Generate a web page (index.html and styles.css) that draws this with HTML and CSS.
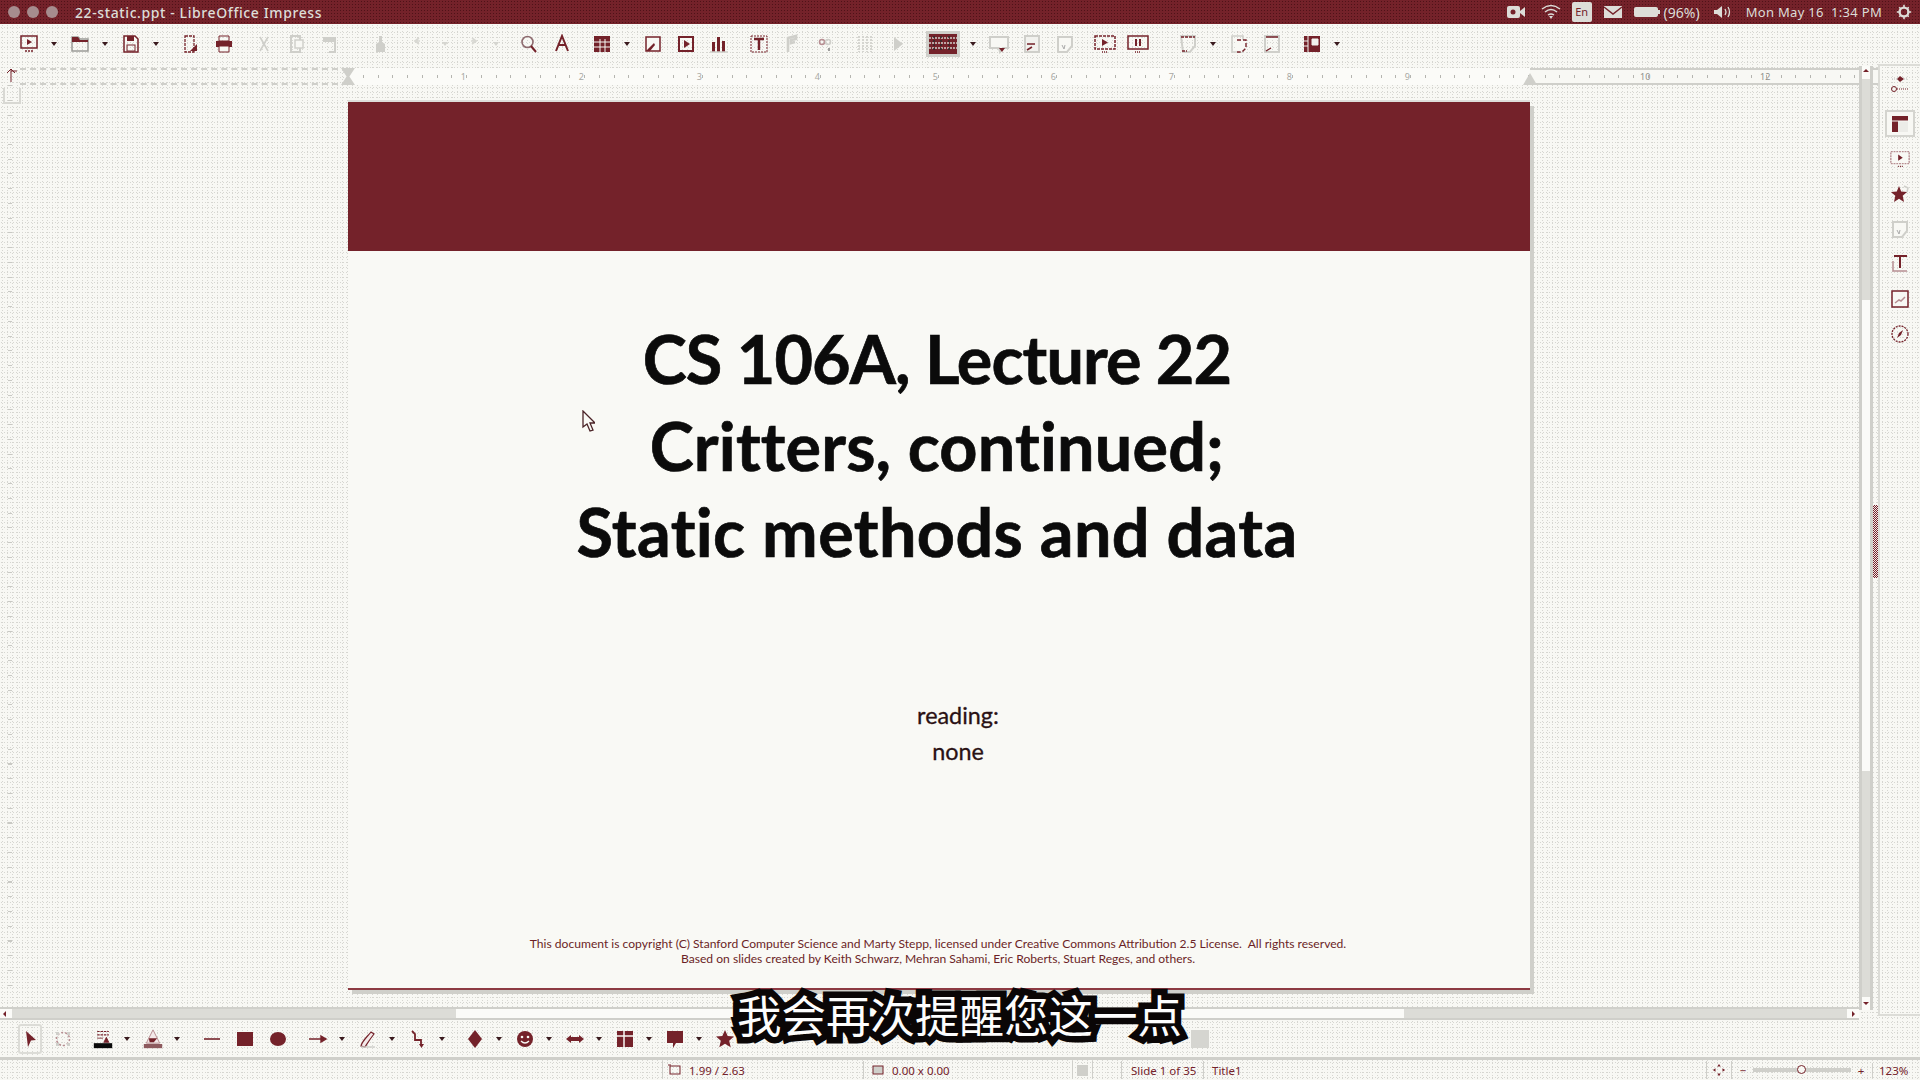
FILE: index.html
```html
<!DOCTYPE html>
<html lang="en">
<head>
    <meta charset="UTF-8">
    <meta name="viewport" content="width=device-width, initial-scale=1.0">
    <title>22-static.ppt - LibreOffice Impress</title>
    <link rel="stylesheet" href="styles.css">
</head>
<body>
    <!-- Icon set -->
    <svg class="icon-defs" xmlns="http://www.w3.org/2000/svg">
        <symbol id="i-present" viewBox="0 0 20 20"><rect x="2" y="2" width="16" height="12" fill="none" stroke="#74222a" stroke-width="1.5"/><path d="M8 5l5 3-5 3z" fill="#74222a"/><path d="M6 17h8" stroke="#74222a" stroke-width="1.5" stroke-dasharray="2 1"/></symbol>
        <symbol id="i-open" viewBox="0 0 20 20"><path d="M2 3h6l2 2h8v12H2z" fill="none" stroke="#9a9a96" stroke-width="1.5"/><path d="M2 3h6l2 3h8v2H2z" fill="#74222a"/></symbol>
        <symbol id="i-save" viewBox="0 0 20 20"><path d="M3 2h11l3 3v13H3z" fill="none" stroke="#74222a" stroke-width="1.5"/><rect x="6" y="2" width="7" height="5" fill="#74222a"/><rect x="6" y="11" width="8" height="6" fill="none" stroke="#74222a"/></symbol>
        <symbol id="i-export" viewBox="0 0 20 20"><path d="M4 2h9v16H4z" fill="none" stroke="#74222a" stroke-width="1.3" stroke-dasharray="3 1"/><path d="M9 17l7-7v7z" fill="#74222a"/></symbol>
        <symbol id="i-print" viewBox="0 0 20 20"><path d="M5 2h10v5H5z" fill="none" stroke="#74222a"/><rect x="2" y="7" width="16" height="6" fill="#74222a"/><path d="M5 12h10v6H5z" fill="#f8f8f4" stroke="#74222a"/></symbol>
        <symbol id="i-cut" viewBox="0 0 20 20"><path d="M6 3l8 14M14 3L6 17" stroke="#cfcfca" stroke-width="1.6"/></symbol>
        <symbol id="i-copy" viewBox="0 0 20 20"><path d="M4 2h9v16H4z" fill="none" stroke="#cfcfca" stroke-width="2"/><path d="M8 6h8v8H8z" fill="#f8f8f4" stroke="#cfcfca" stroke-width="1.5"/></symbol>
        <symbol id="i-paste" viewBox="0 0 20 20"><path d="M3 3h13v5H3z" fill="#cfcfca"/><path d="M15 8v10H9" fill="none" stroke="#cfcfca" stroke-width="2"/></symbol>
        <symbol id="i-brush" viewBox="0 0 20 20"><path d="M9 2h3v6l3 2v8H6v-8l3-2z" fill="#cfcfca"/></symbol>
        <symbol id="i-undo" viewBox="0 0 20 20"><path d="M4 7h6M9 4l-4 3 4 3" fill="none" stroke="#d8d8d3" stroke-width="1.6"/></symbol>
        <symbol id="i-redo" viewBox="0 0 20 20"><path d="M16 7h-6M11 4l4 3-4 3" fill="none" stroke="#d8d8d3" stroke-width="1.6"/></symbol>
        <symbol id="i-find" viewBox="0 0 20 20"><circle cx="8.5" cy="8" r="5.5" fill="none" stroke="#8d6a6e" stroke-width="1.6"/><path d="M12 12l5 6" stroke="#74222a" stroke-width="2"/></symbol>
        <symbol id="i-font" viewBox="0 0 20 20"><path d="M4 17L10 2l6 15M7 11h6" fill="none" stroke="#74222a" stroke-width="2"/></symbol>
        <symbol id="i-table" viewBox="0 0 20 20"><rect x="2" y="2" width="16" height="16" fill="#74222a"/><path d="M8 5v13M13 5v13M2 8h16M2 13h16" stroke="#f8f8f4"/></symbol>
        <symbol id="i-image" viewBox="0 0 20 20"><rect x="3" y="3" width="14" height="14" fill="#f8f8f4" stroke="#74222a" stroke-width="1.5"/><path d="M3 17l8-8 1 2-5 6z" fill="#74222a"/></symbol>
        <symbol id="i-media" viewBox="0 0 20 20"><rect x="3" y="3" width="14" height="14" fill="none" stroke="#74222a" stroke-width="2"/><path d="M8 6l6 4-6 4z" fill="#74222a"/></symbol>
        <symbol id="i-chart" viewBox="0 0 20 20"><path d="M3 18V8h3v10zM8 18V3h3v15zM13 18V7h3v11z" fill="#74222a"/><path d="M1 18h18" stroke="#cfcfca" stroke-width="1.5"/></symbol>
        <symbol id="i-text" viewBox="0 0 20 20"><rect x="2" y="2" width="16" height="16" fill="none" stroke="#74222a" stroke-dasharray="2 1"/><path d="M5 5h10M10 5v11" stroke="#74222a" stroke-width="2.4"/></symbol>
        <symbol id="i-fontwork" viewBox="0 0 20 20"><path d="M6 18V4l8-2v3l-5 1v3l4-1" fill="none" stroke="#cfcfca" stroke-width="2.6"/></symbol>
        <symbol id="i-link" viewBox="0 0 20 20"><circle cx="7" cy="8" r="2.5" fill="none" stroke="#b78e92" stroke-width="1.5"/><circle cx="13" cy="8" r="2.5" fill="none" stroke="#cfcfca" stroke-width="1.5"/><path d="M14 14v3" stroke="#888" stroke-width="1.6"/></symbol>
        <symbol id="i-grid" viewBox="0 0 20 20"><path d="M4 2v16M8 2v16M12 2v16M16 2v16" stroke="#d5d5d0" stroke-width="2" stroke-dasharray="2 1"/></symbol>
        <symbol id="i-play-g" viewBox="0 0 20 20"><path d="M6 3l9 7-9 7z" fill="#cfcfca"/></symbol>
        <symbol id="i-master" viewBox="0 0 28 20"><rect x="0" y="0" width="28" height="20" fill="#74222a"/><path d="M0 4h28M0 9h28M0 14h28" stroke="#cfcfca" stroke-width="1.4" stroke-dasharray="2 1"/><path d="M5 2v16M12 2v16M20 2v16" stroke="#2a2a2a" stroke-width="1.4" stroke-dasharray="2 2"/></symbol>
        <symbol id="i-comment" viewBox="0 0 24 20"><path d="M3 3h18v11h-5l-3 4-1-4H3z" fill="#f8f8f4" stroke="#cfcfca" stroke-width="2"/><path d="M12 14h6l-3 4z" fill="#74222a"/></symbol>
        <symbol id="i-slidesort" viewBox="0 0 20 20"><rect x="3" y="2" width="14" height="16" fill="#f2f2ee" stroke="#cfcfca" stroke-width="2"/><path d="M5 10h8M5 16l5-3" stroke="#74222a" stroke-width="1.6"/></symbol>
        <symbol id="i-shield-g" viewBox="0 0 20 20"><path d="M3 3h14v9l-5 6H3z" fill="#f8f8f4" stroke="#cfcfca" stroke-width="2"/><path d="M7 11l2 4 1-4" stroke="#aaa" fill="none"/></symbol>
        <symbol id="i-show" viewBox="0 0 24 20"><rect x="2" y="2" width="20" height="13" fill="none" stroke="#74222a" stroke-dasharray="3 1" stroke-width="1.5"/><path d="M9 5l6 3.5-6 3.5z" fill="#74222a"/><path d="M9 18h6" stroke="#74222a" stroke-dasharray="1 1" stroke-width="1.5"/></symbol>
        <symbol id="i-pause" viewBox="0 0 24 20"><rect x="2" y="2" width="20" height="13" fill="none" stroke="#74222a" stroke-width="1.5"/><path d="M10 5v7M14 5v7" stroke="#74222a" stroke-width="2"/><path d="M9 18h6" stroke="#74222a" stroke-dasharray="1 1" stroke-width="1.5"/></symbol>
        <symbol id="i-page-a" viewBox="0 0 20 20"><path d="M3 2h14v10l-5 6H5z" fill="none" stroke="#cfcfca" stroke-width="2"/><path d="M3 3h14M4 17h5" stroke="#74222a" stroke-width="1.4" stroke-dasharray="3 1"/></symbol>
        <symbol id="i-page-b" viewBox="0 0 20 20"><path d="M3 2h11v16H3z" fill="none" stroke="#cfcfca" stroke-width="1.6"/><path d="M8 6h9v8l-4 4H8" fill="#f8f8f4" stroke="#74222a" stroke-width="1.4" stroke-dasharray="4 2"/></symbol>
        <symbol id="i-page-c" viewBox="0 0 20 20"><path d="M3 2h14v16H3z" fill="none" stroke="#cfcfca" stroke-width="2"/><path d="M4 3h12M4 17l5-3" stroke="#74222a" stroke-width="1.4"/></symbol>
        <symbol id="i-page-d" viewBox="0 0 20 20"><rect x="2" y="2" width="16" height="16" fill="#74222a"/><path d="M10 5h6v6h-6zM6 2v16M2 7h4M2 12h4" fill="#f2f2ee" stroke="#f2f2ee"/></symbol>
        <!-- drawing toolbar -->
        <symbol id="i-arrow" viewBox="0 0 20 20"><path d="M6 2l10 9-5 .5L8 18z" fill="#74222a"/></symbol>
        <symbol id="i-points" viewBox="0 0 20 20"><circle cx="10" cy="10" r="6.5" fill="none" stroke="#b78e92" stroke-width="1.6" stroke-dasharray="2 2"/><path d="M3 3h3v3H3zM14 3h3v3h-3zM3 14h3v3H3zM14 14h3v3h-3z" fill="#cfcfca"/></symbol>
        <symbol id="i-linecolor" viewBox="0 0 24 24"><path d="M5 3h14M5 7h14" stroke="#74222a" stroke-width="1.4" stroke-dasharray="3 1"/><path d="M5 11h7M16 10l3 6h-6z" stroke="#74222a" fill="#74222a"/><rect x="1" y="17" width="22" height="6" fill="#0b0b0b"/></symbol>
        <symbol id="i-fillcolor" viewBox="0 0 24 24"><path d="M12 1l8 16H4z" fill="#f4e9e9" stroke="#b98f93" stroke-width="1.2"/><path d="M7 11h10l-4 5H8z" fill="#74222a"/><rect x="1" y="18" width="22" height="5" fill="#8d5a5e"/></symbol>
        <symbol id="i-line" viewBox="0 0 20 20"><path d="M2 10h16" stroke="#74222a" stroke-width="1.6"/></symbol>
        <symbol id="i-rect" viewBox="0 0 20 20"><rect x="2" y="3" width="16" height="14" fill="#74222a"/></symbol>
        <symbol id="i-ellipse" viewBox="0 0 20 20"><ellipse cx="10" cy="10" rx="8" ry="7" fill="#74222a"/></symbol>
        <symbol id="i-lineend" viewBox="0 0 20 20"><path d="M1 10h15M13 7l5 3-5 3z" stroke="#74222a" stroke-width="1.4" fill="#74222a"/></symbol>
        <symbol id="i-curve" viewBox="0 0 20 20"><path d="M3 17c1-5 6-9 10-14l3 2c-4 5-7 10-9 13z" fill="#f4e9e9" stroke="#74222a" stroke-width="1.2"/><path d="M3 18h14" stroke="#cfcfca" stroke-width="1.4"/></symbol>
        <symbol id="i-connector" viewBox="0 0 20 20"><path d="M4 2l3 3v6h6v6" fill="none" stroke="#74222a" stroke-width="1.8"/><path d="M11 15h5l-2.5 4z" fill="#74222a"/></symbol>
        <symbol id="i-diamond" viewBox="0 0 20 20"><path d="M10 1l7 9-7 9-7-9z" fill="#74222a"/></symbol>
        <symbol id="i-smile" viewBox="0 0 20 20"><circle cx="10" cy="10" r="8" fill="#74222a"/><circle cx="7" cy="8" r="1.3" fill="#f8f8f4"/><circle cx="13" cy="8" r="1.3" fill="#f8f8f4"/><path d="M6 12q4 4 8 0" stroke="#f8f8f4" fill="none" stroke-width="1.3"/></symbol>
        <symbol id="i-dblarrow" viewBox="0 0 20 20"><path d="M1 10l5-4v2h8V6l5 4-5 4v-2H6v2z" fill="#74222a"/></symbol>
        <symbol id="i-flow" viewBox="0 0 20 20"><rect x="2" y="2" width="16" height="16" fill="#74222a"/><path d="M2 7h16M9 2v16" stroke="#f8f8f4" stroke-width="1.5"/></symbol>
        <symbol id="i-callout" viewBox="0 0 20 20"><path d="M2 2h16v12h-7l-3 5v-5H2z" fill="#74222a"/></symbol>
        <symbol id="i-star" viewBox="0 0 20 20"><path d="M10 1l2.7 6 6.3.6-4.8 4.2 1.5 6.4-5.7-3.4-5.7 3.4 1.5-6.4L1 7.600 7.300 7z" fill="#74222a"/></symbol>
        <!-- sidebar -->
        <symbol id="i-settings" viewBox="0 0 24 24"><path d="M4 7h16" stroke="#bbb" stroke-dasharray="1 1"/><path d="M12 4l4 3-4 3-3-3z" fill="#74222a"/><circle cx="6" cy="17" r="2.5" fill="none" stroke="#74222a"/><path d="M9 17h11" stroke="#74222a" stroke-dasharray="1 1"/></symbol>
        <symbol id="i-props" viewBox="0 0 20 20"><rect x="2" y="2" width="16" height="16" fill="#74222a"/><path d="M8 7h10v11H8z" fill="#ecece8"/><path d="M2 7h16" stroke="#f8f8f4"/></symbol>
        <symbol id="i-trans" viewBox="0 0 24 20"><rect x="2" y="2" width="20" height="13" fill="#f8f8f4" stroke="#b78e92" stroke-dasharray="2 1" stroke-width="1.5"/><path d="M10 5l5 3.5-5 3.5z" fill="#74222a"/><path d="M10 18h5" stroke="#74222a" stroke-dasharray="1 1" stroke-width="1.5"/></symbol>
        <symbol id="i-sidestar" viewBox="0 0 20 20"><path d="M9 2l2.2 5.4L17 8l-4.3 3.800L14 18l-5-3.300L4 18l1.300-6.200L1 8l5.800-.6z" fill="#74222a"/><path d="M14 2l4 2-1 4" stroke="#cfcfca" fill="none" stroke-width="1.5"/></symbol>
        <symbol id="i-sidetext" viewBox="0 0 20 20"><path d="M4 2h13M10 2v12" stroke="#74222a" stroke-width="2"/><path d="M3 7v10h14" fill="none" stroke="#b78e92" stroke-width="1.5"/></symbol>
        <symbol id="i-gallery" viewBox="0 0 20 20"><rect x="2" y="2" width="16" height="16" fill="#f8f8f4" stroke="#74222a" stroke-width="1.5"/><path d="M5 14l4-3 2 1 4-4" fill="none" stroke="#b78e92" stroke-width="1.5"/></symbol>
        <symbol id="i-compass" viewBox="0 0 20 20"><circle cx="10" cy="10" r="8" fill="none" stroke="#74222a" stroke-dasharray="2 1" stroke-width="1.3"/><path d="M13 6l-2 5-4 3 2-5z" fill="#74222a"/></symbol>
        <!-- indicators -->
        <symbol id="i-camera" viewBox="0 0 20 14"><rect x="1" y="1" width="13" height="12" rx="2" fill="#ddddd8"/><path d="M14 6l5-4v10l-5-4z" fill="#ddddd8"/><circle cx="7" cy="7" r="2.5" fill="#74222a"/></symbol>
        <symbol id="i-wifi" viewBox="0 0 20 16"><path d="M1 5q9-7 18 0M4 8q6-5 12 0M7 11q3-2 6 0" fill="none" stroke="#ddddd8" stroke-width="1.4"/><path d="M10 15l-2-3h4z" fill="#ddddd8"/></symbol>
        <symbol id="i-mail" viewBox="0 0 20 14"><rect x="1" y="1" width="18" height="12" fill="#ddddd8"/><path d="M1 2l9 7 9-7" fill="none" stroke="#74222a" stroke-width="1.4"/></symbol>
        <symbol id="i-battery" viewBox="0 0 26 12"><rect x="0" y="1" width="24" height="10" rx="2" fill="#ddddd8"/><rect x="24" y="4" width="2" height="4" fill="#ddddd8"/></symbol>
        <symbol id="i-volume" viewBox="0 0 20 14"><path d="M1 5h3l5-4v12L4 9H1z" fill="#ddddd8"/><path d="M12 4q2 3 0 6M15 2q3 5 0 10" fill="none" stroke="#ddddd8" stroke-width="1.3"/></symbol>
        <symbol id="i-gear" viewBox="0 0 20 20"><circle cx="10" cy="10" r="5.5" fill="none" stroke="#ddddd8" stroke-width="3"/><path d="M10 1v3M10 16v3M1 10h3M16 10h3M4 4l2 2M14 14l2 2M16 4l-2 2M6 14l-2 2" stroke="#ddddd8" stroke-width="2"/></symbol>
    </svg>

    <div class="app">
        <!-- Title bar -->
        <div class="titlebar">
            <div class="window-buttons"><span></span><span></span><span></span></div>
            <div class="window-title">22-static.ppt - LibreOffice Impress</div>
            <div class="indicators">
                <svg class="ind ind-camera"><use href="#i-camera"/></svg>
                <svg class="ind ind-wifi"><use href="#i-wifi"/></svg>
                <span class="ind-lang">En</span>
                <svg class="ind ind-mail"><use href="#i-mail"/></svg>
                <svg class="ind ind-battery"><use href="#i-battery"/></svg>
                <span class="ind-text ind-percent">(96%)</span>
                <svg class="ind ind-volume"><use href="#i-volume"/></svg>
                <span class="ind-text ind-clock">Mon May 16&nbsp; 1:34 PM</span>
                <svg class="ind ind-gear"><use href="#i-gear"/></svg>
            </div>
        </div>

        <!-- Standard toolbar -->
        <div class="toolbar">
            <svg class="btn"><use href="#i-present"/></svg><i class="drop"></i>
            <svg class="btn"><use href="#i-open"/></svg><i class="drop"></i>
            <svg class="btn"><use href="#i-save"/></svg><i class="drop"></i>
            <svg class="btn g18"><use href="#i-export"/></svg>
            <svg class="btn"><use href="#i-print"/></svg>
            <svg class="btn g16"><use href="#i-cut"/></svg>
            <svg class="btn"><use href="#i-copy"/></svg>
            <svg class="btn"><use href="#i-paste"/></svg>
            <svg class="btn g26"><use href="#i-brush"/></svg>
            <svg class="btn g16"><use href="#i-undo"/></svg><i class="drop drop-off"></i>
            <svg class="btn"><use href="#i-redo"/></svg><i class="drop drop-off"></i>
            <svg class="btn g16"><use href="#i-find"/></svg>
            <svg class="btn"><use href="#i-font"/></svg>
            <svg class="btn g16"><use href="#i-table"/></svg><i class="drop"></i>
            <svg class="btn"><use href="#i-image"/></svg>
            <svg class="btn"><use href="#i-media"/></svg>
            <svg class="btn"><use href="#i-chart"/></svg>
            <svg class="btn g16"><use href="#i-text"/></svg>
            <svg class="btn"><use href="#i-fontwork"/></svg>
            <svg class="btn"><use href="#i-link"/></svg>
            <svg class="btn g16"><use href="#i-grid"/></svg>
            <svg class="btn"><use href="#i-play-g"/></svg>
            <svg class="btn-master g16"><use href="#i-master"/></svg><i class="drop"></i>
            <svg class="btn"><use href="#i-comment"/></svg>
            <svg class="btn"><use href="#i-slidesort"/></svg>
            <svg class="btn"><use href="#i-shield-g"/></svg>
            <svg class="btn g16"><use href="#i-show"/></svg>
            <svg class="btn"><use href="#i-pause"/></svg>
            <svg class="btn g26"><use href="#i-page-a"/></svg><i class="drop"></i>
            <svg class="btn"><use href="#i-page-b"/></svg>
            <svg class="btn"><use href="#i-page-c"/></svg>
            <svg class="btn g16"><use href="#i-page-d"/></svg><i class="drop"></i>
        </div>

        <div class="workspace">
            <div class="editor">
                <div class="hruler">
                    <div class="ruler-corner"><svg class="corner-mark" viewBox="0 0 12 14"><path d="M6 14V2M2 5l4-4 4 4M6 3h6" fill="none" stroke="#74222a" stroke-width="1"/></svg></div>
                    <div class="ruler-margin"></div>
                    <div class="ruler-page">
                        <span>1</span><span>2</span><span>3</span><span>4</span><span>5</span>
                        <span>6</span><span>7</span><span>8</span><span>9</span>
                    </div>
                    <div class="ruler-rest"><span>10</span><span>12</span></div>
                </div>
                <div class="canvas-row">
                    <div class="vruler"><div class="vruler-box"></div></div>
                    <div class="canvas">
                        <div class="slide">
                            <div class="slide-header"></div>
                            <div class="slide-title">
                                <div class="title-line-1">CS 106A, Lecture 22</div>
                                <div class="title-line-2">Critters, continued;</div>
                                <div class="title-line-3">Static methods and data</div>
                            </div>
                            <div class="slide-reading">
                                <div>reading:</div>
                                <div>none</div>
                            </div>
                            <div class="slide-footer">
                                <div>This document is copyright (C) Stanford Computer Science and Marty Stepp, licensed under Creative Commons Attribution 2.5 License.&nbsp; All rights reserved.</div>
                                <div>Based on slides created by Keith Schwarz, Mehran Sahami, Eric Roberts, Stuart Reges, and others.</div>
                            </div>
                            <svg class="mouse-cursor" viewBox="0 0 13 22"><path d="M1 1v16l4-3 3 7 3-1-3-7h5z" fill="#f9f9f5" stroke="#4a2226" stroke-width="1.3"/></svg>
                        </div>
                    </div>
                </div>
                <div class="hscroll">
                    <i class="scroll-btn left"></i>
                    <div class="hscroll-thumb"></div>
                    <i class="scroll-btn right"></i>
                </div>
            </div>
            <div class="vscroll">
                <i class="scroll-btn up"></i>
                <div class="vscroll-thumb"></div>
                <i class="scroll-btn down"></i>
            </div>
            <div class="sash-column"><div class="sash"></div></div>
            <div class="sidebar">
                <svg class="side-settings"><use href="#i-settings"/></svg>
                <div class="side-item side-active"><svg><use href="#i-props"/></svg></div>
                <div class="side-item"><svg class="side-wide"><use href="#i-trans"/></svg></div>
                <div class="side-item"><svg><use href="#i-sidestar"/></svg></div>
                <div class="side-item"><svg><use href="#i-shield-g"/></svg></div>
                <div class="side-item"><svg><use href="#i-sidetext"/></svg></div>
                <div class="side-item"><svg><use href="#i-gallery"/></svg></div>
                <div class="side-item"><svg><use href="#i-compass"/></svg></div>
            </div>
        </div>

        <!-- Drawing toolbar -->
        <div class="drawbar">
            <div class="select-box"><svg class="btn"><use href="#i-arrow"/></svg></div>
            <svg class="btn"><use href="#i-points"/></svg>
            <svg class="btn g16"><use href="#i-linecolor"/></svg><i class="drop"></i>
            <svg class="btn"><use href="#i-fillcolor"/></svg><i class="drop"></i>
            <svg class="btn g18"><use href="#i-line"/></svg>
            <svg class="btn"><use href="#i-rect"/></svg>
            <svg class="btn"><use href="#i-ellipse"/></svg>
            <svg class="btn g16"><use href="#i-lineend"/></svg><i class="drop"></i>
            <svg class="btn"><use href="#i-curve"/></svg><i class="drop"></i>
            <svg class="btn"><use href="#i-connector"/></svg><i class="drop"></i>
            <svg class="btn g16"><use href="#i-diamond"/></svg><i class="drop"></i>
            <svg class="btn"><use href="#i-smile"/></svg><i class="drop"></i>
            <svg class="btn"><use href="#i-dblarrow"/></svg><i class="drop"></i>
            <svg class="btn"><use href="#i-flow"/></svg><i class="drop"></i>
            <svg class="btn"><use href="#i-callout"/></svg><i class="drop"></i>
            <svg class="btn"><use href="#i-star"/></svg>
            <div class="grey-block"></div>
        </div>

        <!-- Status bar -->
        <div class="statusbar">
            <div class="status-cell cell-pos"><svg class="status-icon" viewBox="0 0 14 12"><rect x="2" y="2" width="10" height="8" fill="none" stroke="#74222a"/><path d="M0 1h3" stroke="#74222a"/></svg>1.99 / 2.63</div>
            <div class="status-cell cell-size"><svg class="status-icon" viewBox="0 0 14 12"><rect x="2" y="2" width="10" height="8" fill="#cfcfca" stroke="#74222a"/></svg>0.00 x 0.00</div>
            <div class="status-cell cell-mod"><i class="mod-box"></i></div>
            <div class="status-cell cell-gap"></div>
            <div class="status-cell cell-slide">Slide 1 of 35</div>
            <div class="status-cell cell-layout">Title1</div>
            <div class="status-fit"><svg viewBox="0 0 16 16"><path d="M8 1l2 3H6zM8 15l-2-3h4zM1 8l3-2v4zM15 8l-3 2V6z" fill="#74222a"/></svg></div>
            <div class="status-zoom">
                <span class="zoom-sign">&minus;</span>
                <div class="zoom-track"><i class="zoom-thumb"></i></div>
                <span class="zoom-sign">+</span>
            </div>
            <div class="status-percent">123%</div>
        </div>

        <!-- Burned in subtitle -->
        <div class="subtitle">我会再次提醒您这一点</div>
    </div>
</body>
</html>
```

FILE: styles.css
```css
/* Global styles */
html, body {
    margin: 0;
    padding: 0;
}

body {
    width: 1920px;
    height: 1080px;
    overflow: hidden;
    font-family: "Noto Sans", "Liberation Sans", sans-serif;
    background-color: #f3f3ef;
}

.icon-defs {
    position: absolute;
    width: 0;
    height: 0;
}

.app {
    position: relative;
    display: flex;
    flex-direction: column;
    width: 1920px;
    height: 1080px;
    overflow: hidden;
    background-color: #f8f8f4;
    background-image:
        radial-gradient(circle at center, #d6d6d1 0.6px, transparent 0.8px),
        radial-gradient(circle at center, #d6d6d1 0.6px, transparent 0.8px);
    background-size: 3px 5px, 5px 3px;
}

/* Title bar */
.titlebar {
    display: flex;
    align-items: center;
    flex: none;
    height: 24px;
    background-color: #74222a;
    background-image: radial-gradient(circle at center, #4f1218 0.6px, transparent 0.8px);
    background-size: 3px 3px;
    color: #ddddd8;
}

.window-buttons {
    display: flex;
    gap: 7px;
    margin-left: 8px;
}

.window-buttons span {
    width: 12px;
    height: 12px;
    border-radius: 50%;
    background-color: #a68c8e;
}

.window-title {
    margin-left: 17px;
    font-size: 14px;
    font-weight: 500;
    letter-spacing: 0.6px;
    white-space: nowrap;
}

.indicators {
    display: flex;
    align-items: center;
    margin-left: auto;
    padding-right: 8px;
}

.ind {
    display: block;
    height: 16px;
    flex: none;
}

.ind-camera { width: 20px; }
.ind-wifi { width: 20px; margin-left: 15px; }
.ind-mail { width: 20px; margin-left: 11px; }
.ind-battery { width: 26px; margin-left: 11px; }
.ind-volume { width: 20px; margin-left: 13px; }
.ind-gear { width: 16px; margin-left: 14px; }

.ind-lang {
    width: 20px;
    height: 20px;
    margin-left: 11px;
    background-color: #ddddd8;
    color: #74222a;
    font-size: 11px;
    line-height: 20px;
    text-align: center;
    border-radius: 2px;
}

.ind-text {
    font-size: 13px;
    white-space: nowrap;
}

.ind-percent { margin-left: 4px; font-size: 14px; }
.ind-clock { margin-left: 13px; letter-spacing: 0.3px; }

/* Toolbars */
.toolbar, .drawbar {
    display: flex;
    align-items: center;
    flex: none;
}

.toolbar {
    height: 40px;
    padding-left: 17px;
}

.btn {
    display: block;
    flex: none;
    width: 24px;
    height: 20px;
    margin-left: 9px;
}

.toolbar > .btn:first-child {
    margin-left: 0;
}

.btn-master {
    display: block;
    flex: none;
    width: 34px;
    height: 26px;
    padding: 2px 3px;
    box-sizing: border-box;
    background-color: #cfcfca;
}

.drop {
    flex: none;
    width: 10px;
    height: 4px;
    margin-left: 8px;
    position: relative;
}

.drop::after {
    content: "";
    position: absolute;
    left: 2px;
    top: 0;
    border-left: 3px solid transparent;
    border-right: 3px solid transparent;
    border-top: 4px solid #3a1a1e;
}

.drop-off::after {
    border-top-color: #d5d5d0;
}

.toolbar .g16, .drawbar .g16 { margin-left: 16px; }
.toolbar .g18, .drawbar .g18 { margin-left: 18px; }
.toolbar .g26 { margin-left: 26px; }

/* Workspace */
.workspace {
    display: flex;
    flex: none;
    height: 956px;
}

.editor {
    display: flex;
    flex-direction: column;
    width: 1859px;
    flex: none;
}

.hruler {
    display: flex;
    flex: none;
    height: 17px;
    margin-top: 4px;
}

.ruler-corner {
    flex: none;
    width: 20px;
    padding-left: 5px;
    box-sizing: border-box;
}

.corner-mark {
    display: block;
    width: 12px;
    height: 14px;
}

/* the strip left of the page is rubbed out by a logo in the video */
.ruler-margin {
    flex: none;
    width: 328px;
    border-top: 2px dashed #cfcfca;
    border-bottom: 2px dashed #cfcfca;
    box-sizing: border-box;
}

.ruler-page, .ruler-rest {
    display: flex;
    box-sizing: border-box;
    font-size: 9px;
    background-image: repeating-linear-gradient(90deg, #b5b5b0 0 1px, transparent 1px 14.75px);
    background-size: 100% 3px;
    background-position: 0 7px;
    background-repeat: no-repeat;
}

.ruler-page {
    position: relative;
    flex: none;
    width: 1182px;
    line-height: 17px;
    color: #a9a9a4;
    background-color: #fbfbf8;
}

.ruler-page::before, .ruler-page::after {
    content: "";
    position: absolute;
    top: 0;
    width: 14px;
    height: 17px;
    background-color: #cfcfca;
}

.ruler-page::before {
    left: -7px;
    clip-path: polygon(0 0, 100% 0, 60% 50%, 100% 100%, 0 100%, 40% 50%);
}

.ruler-page::after {
    right: -7px;
    clip-path: polygon(50% 30%, 100% 100%, 0 100%);
}

.ruler-page span {
    flex: none;
    width: 118px;
    text-align: right;
}

.ruler-rest {
    flex: 1;
    border-top: 2px solid #cfcfca;
    border-bottom: 2px solid #cfcfca;
    line-height: 13px;
    padding-left: 110px;
    background-color: #f8f8f4;
    background-position: 0 5px;
}

.ruler-rest span {
    width: 120px;
    color: #8f8f8a;
}

.canvas-row {
    display: flex;
    flex: 1;
    min-height: 0;
}

.vruler {
    flex: none;
    width: 20px;
    box-sizing: border-box;
    padding: 3px 0 0 3px;
    background-image: repeating-linear-gradient(180deg, #c9c9c4 0 1px, transparent 1px 14.75px);
    background-size: 4px 100%;
    background-position: 8px 0;
    background-repeat: no-repeat;
}

.vruler-box {
    width: 14px;
    height: 14px;
    border: 2px solid #d8d8d3;
    border-top: none;
}

.canvas {
    flex: 1;
    padding: 17px 0 0 328px;
}

.slide {
    position: relative;
    display: flex;
    flex-direction: column;
    width: 1182px;
    height: 888px;
    background-color: #f9f9f5;
    box-shadow: 4px 4px 0 #cfcfca, 0 -2px 0 #dededa;
    border-bottom: 2px solid #8d3a42;
    box-sizing: border-box;
}

.slide-header {
    flex: none;
    height: 149px;
    background-color: #74222a;
}

.slide-title {
    flex: none;
    margin-top: 64px;
    padding-right: 4px;
    font-family: Lato, "Noto Sans", sans-serif;
    font-size: 66.5px;
    font-weight: 700;
    line-height: 86.5px;
    text-align: center;
    color: #0b0b0b;
    -webkit-text-stroke: 0.7px #0b0b0b;
}

/* Lato runs a little off Calibri, so each line gets its own tracking */
.title-line-1 { letter-spacing: -0.9px; }
.title-line-2 { letter-spacing: 0.2px; }
.title-line-3 { letter-spacing: 0.4px; }

.slide-reading {
    flex: none;
    margin-top: 122px;
    padding-left: 38px;
    font-family: Lato, "Noto Sans", sans-serif;
    font-size: 23.4px;
    line-height: 36px;
    text-align: center;
    color: #2a1114;
    -webkit-text-stroke: 0.3px #2a1114;
}

.slide-footer {
    flex: none;
    margin-top: 167px;
    padding-right: 2px;
    font-family: Lato, "Noto Sans", sans-serif;
    font-size: 12.1px;
    line-height: 15px;
    text-align: center;
    color: #6b1f26;
}

.mouse-cursor {
    position: absolute;
    left: 234px;
    top: 308px;
    width: 13px;
    height: 22px;
}

/* Scrollbars */
.hscroll {
    position: relative;
    flex: none;
    height: 13px;
    margin-top: 10px;
    background-color: #dcdcd7;
    border-top: 2px solid #cfcfca;
    border-bottom: 2px solid #cfcfca;
    box-sizing: border-box;
}

.hscroll-thumb {
    position: absolute;
    left: 456px;
    top: 0;
    bottom: 0;
    width: 948px;
    background-color: #fbfbf8;
}

.vscroll {
    position: relative;
    flex: none;
    width: 14px;
    height: 944px;
    margin-top: 2px;
    background-color: #dcdcd7;
    border-left: 3px solid #cfcfca;
    border-right: 3px solid #cfcfca;
    box-sizing: border-box;
}

.vscroll-thumb {
    position: absolute;
    left: 0;
    right: 0;
    top: 234px;
    height: 471px;
    background-color: #fbfbf8;
}

.scroll-btn {
    position: absolute;
    display: block;
    width: 12px;
    height: 13px;
    background-color: #fbfbf8;
}

.vscroll .scroll-btn {
    width: 8px;
}

.hscroll .scroll-btn {
    height: 9px;
}

.scroll-btn::after {
    content: "";
    position: absolute;
    left: 4px;
    top: 2px;
    border: 3px solid transparent;
}

.scroll-btn.left { left: 0; top: 0; }
.scroll-btn.left::after { border-right-color: #74222a; left: 0; }
.scroll-btn.right { right: 0; top: 0; }
.scroll-btn.right::after { border-left-color: #74222a; left: 5px; }
.scroll-btn.up { left: 0; top: 0; }
.scroll-btn.up::after { border-bottom-color: #74222a; top: 0; left: 1px; }
.scroll-btn.down { left: 0; bottom: 0; }
.scroll-btn.down::after { border-top-color: #74222a; top: 5px; left: 1px; }

.sash-column {
    flex: none;
    width: 5px;
    padding-top: 441px;
}

.sash {
    height: 73px;
    background-image: repeating-conic-gradient(#74222a 0 25%, #f2e9e9 0 50%);
    background-size: 2px 2px;
}

.sidebar {
    flex: none;
    display: flex;
    flex-direction: column;
    align-items: center;
    width: 42px;
    height: 952px;
    box-sizing: border-box;
    border-left: 2px solid #dcdcd7;
    border-top: 2px solid #dcdcd7;
    border-bottom: 2px solid #dcdcd7;
    padding-top: 6px;
}

.side-settings {
    display: block;
    width: 24px;
    height: 24px;
    margin-bottom: 14px;
}

.side-item {
    display: flex;
    align-items: center;
    justify-content: center;
    width: 30px;
    height: 27px;
    margin-bottom: 8px;
    flex: none;
}

.side-item svg {
    display: block;
    width: 20px;
    height: 20px;
}

.side-item svg.side-wide {
    width: 22px;
}

.side-active {
    border: 2px solid #d4d4cf;
    box-sizing: border-box;
    background-color: #f8f8f4;
}

/* Drawing toolbar */
.drawbar {
    height: 37px;
    padding-left: 18px;
    position: relative;
}

.drawbar .drop {
    margin-left: 7px;
}

.select-box {
    flex: none;
    width: 24px;
    height: 30px;
    display: flex;
    align-items: center;
    justify-content: center;
    border: 2px solid #dcdcd7;
    border-radius: 3px;
    box-sizing: border-box;
}

.select-box .btn {
    margin-left: 0;
    width: 20px;
}

.grey-block {
    flex: none;
    width: 18px;
    height: 18px;
    margin-left: 454px;
    background-color: #d5d5d0;
}

/* Status bar */
.statusbar {
    display: flex;
    align-items: center;
    flex: 1;
    min-height: 0;
    box-sizing: border-box;
    padding-left: 662px;
    border-top: 3px solid #cfcfca;
    font-size: 11.5px;
    color: #74222a;
    white-space: nowrap;
}

.status-cell {
    display: flex;
    align-items: center;
    height: 18px;
    box-sizing: border-box;
    border-left: 1px solid #cfcfca;
}

.status-icon {
    width: 14px;
    height: 12px;
    margin-right: 7px;
}

.cell-pos { width: 201px; padding-left: 5px; flex: none; }
.cell-size { width: 209px; padding-left: 7px; flex: none; }
.cell-mod { width: 20px; justify-content: center; flex: none; }
.cell-gap { width: 29px; flex: none; }
.cell-slide { width: 82px; padding-left: 9px; flex: none; }
.cell-layout { width: 50px; padding-left: 8px; flex: none; }

.mod-box {
    display: block;
    width: 11px;
    height: 11px;
    background-color: #cfcfca;
}

.status-fit {
    flex: none;
    width: 24px;
    height: 18px;
    margin-left: 453px;
    border-left: 1px solid #cfcfca;
    border-right: 1px solid #cfcfca;
    display: flex;
    align-items: center;
    justify-content: center;
}

.status-fit svg {
    width: 14px;
    height: 14px;
}

.status-zoom {
    display: flex;
    align-items: center;
    flex: none;
    width: 140px;
    padding-left: 5px;
    box-sizing: border-box;
}

.zoom-sign {
    flex: none;
    width: 12px;
    text-align: center;
}

.zoom-track {
    position: relative;
    flex: none;
    width: 98px;
    height: 4px;
    margin: 0 4px;
    background-color: #cfcfca;
}

.zoom-thumb {
    position: absolute;
    left: 44px;
    top: -3px;
    width: 7px;
    height: 7px;
    border: 1px solid #74222a;
    border-radius: 50%;
    background-color: #f8f8f4;
}

.status-percent {
    flex: none;
    padding-left: 6px;
    border-left: 1px solid #cfcfca;
}

/* Subtitle burned into the video */
.subtitle {
    position: absolute;
    left: 737px;
    top: 986px;
    font-family: "Noto Sans CJK SC", sans-serif;
    font-size: 44.5px;
    line-height: 56px;
    white-space: nowrap;
    color: #fdfdfd;
    -webkit-text-stroke: 13px #0a0606;
    paint-order: stroke fill;
}
```
